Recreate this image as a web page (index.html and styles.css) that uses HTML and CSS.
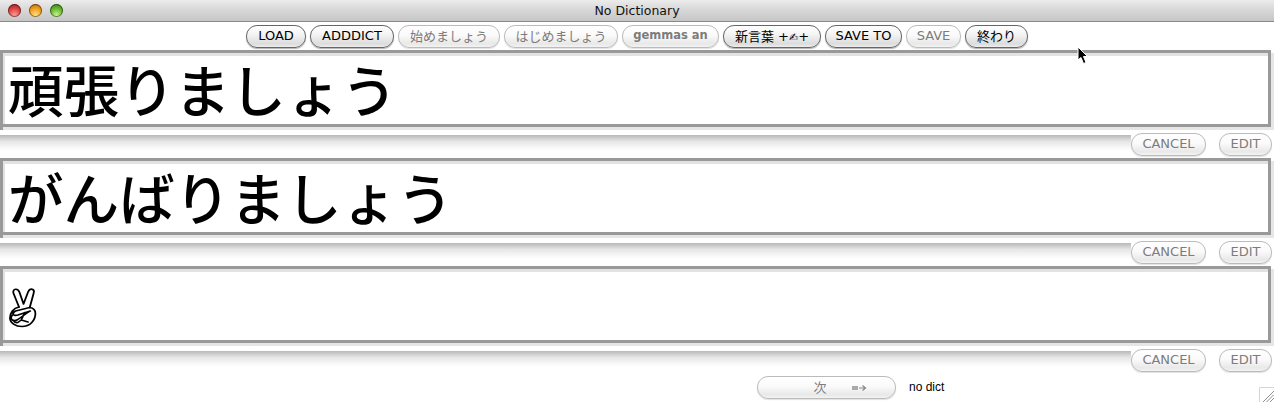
FILE: index.html
```html
<!DOCTYPE html>
<html lang="ja">

<head>
    <meta charset="UTF-8">
    <title>No Dictionary</title>
    <link rel="stylesheet" href="styles.css">
</head>

<body>
<div class="window">
    <!-- title bar -->
    <div class="titlebar">
        <div class="lights">
            <span class="light red"></span>
            <span class="light yellow"></span>
            <span class="light green"></span>
        </div>
        No Dictionary
    </div>

    <!-- toolbar -->
    <div class="toolbar">
        <button class="btn w-load">LOAD</button>
        <button class="btn w-add">ADDDICT</button>
        <button class="btn off w-start1">始めましょう</button>
        <button class="btn off w-start2">はじめましょう</button>
        <button class="btn off w-gem bold">gemmas an</button>
        <button class="btn w-new">新言葉 +<span class="tiny">✍</span>+</button>
        <button class="btn w-saveto">SAVE TO</button>
        <button class="btn off w-save">SAVE</button>
        <button class="btn w-end">終わり</button>
    </div>

    <!-- field 1 -->
    <div class="field">頑張りましょう</div>
    <div class="actions">
        <div class="strip"></div>
        <button class="btn off w-cancel">CANCEL</button>
        <button class="btn off w-edit">EDIT</button>
    </div>

    <!-- field 2 -->
    <div class="field">がんばりましょう</div>
    <div class="actions">
        <div class="strip"></div>
        <button class="btn off w-cancel">CANCEL</button>
        <button class="btn off w-edit">EDIT</button>
    </div>

    <!-- field 3 -->
    <div class="field">
        <svg class="peace" width="38" height="48" viewBox="0 0 38 48" fill="none" stroke="#000" stroke-width="1.6" stroke-linejoin="round" stroke-linecap="round">
            <g transform="translate(-0.8 0) scale(1.13 1)">
                <path d="M14 23 L9 9 Q8.5 5.5 11 5.2 Q13.5 5 14.5 8.5 L18 20 L22 8 Q23.2 4.8 25.6 5.2 Q27.8 5.8 27 9 L23.5 23.5"/>
                <path d="M14 23 C9 24 6 29 6 34 C6 39 11 42.5 16.5 42.5 C24 42.5 28.5 36 28.5 29.5 C28.5 26 26.5 24 23.5 23.5 L11 27 Q8 28.5 9 30.5 Q10 32 13 31 L24 27"/>
                <path d="M8 31 Q6 34 8 36 Q10 37.5 13 35.5 L23 27.5 M9 36.5 Q10 39 13 38.5 L16 36 L22 38 M16 36 L19 28.5"/>
            </g>
        </svg>
    </div>
    <div class="actions">
        <div class="strip"></div>
        <button class="btn off w-cancel">CANCEL</button>
        <button class="btn off w-edit">EDIT</button>
    </div>

    <!-- next -->
    <div class="footer">
        <button class="btn off w-next">次<svg class="next-arrow" width="15" height="8" viewBox="0 0 15 8">
            <rect x="0" y="2" width="6" height="4" fill="#aaa"/>
            <path d="M7 4 H13 M10.5 1.5 L13.5 4 L10.5 6.5" fill="none" stroke="#888" stroke-width="1.2"/>
        </svg></button>
        <span class="status">no dict</span>
    </div>

    <svg class="grip" width="15" height="15" viewBox="0 0 15 15" fill="none">
        <path d="M0.5 15 V0.5 H15" stroke="#d4d4d4"/>
        <path d="M4 15 L15 4 M7.5 15 L15 7.5 M11 15 L15 11" stroke="#8c8c8c"/>
    </svg>

    <svg class="cursor" width="12" height="19" viewBox="0 0 12 19">
        <path d="M1 1 L1 14 L4 11.5 L6.5 17.5 L9 16.5 L6.5 10.5 L10.5 10.5 Z" fill="#000" stroke="#fff" stroke-width="1"/>
    </svg>
</div>
</body>

</html>
```

FILE: styles.css
```css
html, body {
    margin: 0;
    padding: 0;
    background-color: #fff;
}

.window {
    width: 1274px;
    height: 402px;
    position: relative;
    overflow: hidden;
    font-family: "DejaVu Sans", "Noto Sans CJK JP", sans-serif;
    color: #000;
}

.titlebar {
    height: 21px;
    line-height: 21px;
    text-align: center;
    font-size: 12.5px;
    color: #111;
    background: linear-gradient(#ececec, #d8d8d8 45%, #c6c6c6);
    border-bottom: 1px solid #8a8a8a;
    position: relative;
}

.lights {
    display: flex;
    gap: 8px;
    position: absolute;
    top: 4px;
    left: 8px;
}

.light {
    width: 13px;
    height: 13px;
    border-radius: 50%;
    box-shadow: inset 0 0 0 1px rgba(0, 0, 0, 0.45);
}

.red {
    background: radial-gradient(circle at 50% 85%, #ff9a96, #d8403c 55%, #8e1a18);
}

.yellow {
    background: radial-gradient(circle at 50% 85%, #ffdf80, #ec9a1e 55%, #a8620c);
}

.green {
    background: radial-gradient(circle at 50% 85%, #c6f58a, #62b32c 55%, #33751a);
}

.toolbar {
    height: 28px;
    display: flex;
    justify-content: center;
    align-items: center;
    gap: 4px;
}

.btn {
    height: 23px;
    padding: 0 0 2px;
    box-sizing: border-box;
    border: 1px solid #666;
    border-radius: 11px;
    background: linear-gradient(#fff, #f4f4f4 40%, #dcdcdc 85%, #eee);
    box-shadow: 0 1px 1px rgba(0, 0, 0, 0.3);
    font-family: inherit;
    font-size: 13px;
    color: #000;
    flex: none;
}

.off {
    border-color: #bbb;
    background: linear-gradient(#fff, #fafafa 45%, #e8e8e8 85%, #f4f4f4);
    box-shadow: 0 1px 1px rgba(0, 0, 0, 0.12);
    color: #7c7c7c;
}

.bold {
    font-weight: bold;
    font-size: 11.5px;
}

.tiny {
    font-size: 11px;
}

.w-load { width: 60px; }
.w-add { width: 84px; }
.w-start1 { width: 102px; }
.w-start2 { width: 114px; }
.w-gem { width: 97px; }
.w-new { width: 98px; }
.w-saveto { width: 77px; }
.w-save { width: 55px; }
.w-end { width: 63px; }
.w-cancel { width: 75px; margin-top: 6px; }
.w-edit { width: 53px; margin-top: 6px; margin-left: 13px; }

.field {
    width: 1271px;
    height: 77px;
    box-sizing: border-box;
    border: 3px solid #999;
    /* bevel: light inside top/left, light outside right/bottom */
    box-shadow: inset 2px 3px 0 #e2e2e2, 3px 3px 0 #e6e6e6, 0 3px 0 #999;
    padding: 3px 0 0 5px;
    font-family: "Noto Sans CJK JP", sans-serif;
    font-weight: 500;
    font-size: 55.6px;
    line-height: 64px;
    white-space: nowrap;
}

.peace {
    display: block;
    margin: 12px 0 0 -4px;
}

.actions {
    height: 31px;
    display: flex;
    align-items: flex-start;
}

.strip {
    width: 1131px;
    height: 16px;
    margin-top: 8px;
    background: linear-gradient(#b8b8b8, #e6e6e6 40%, #f6f6f6 75%, #fff);
}

.footer {
    height: 28px;
    display: flex;
    align-items: flex-start;
    padding: 2px 0 0 757px;
    box-sizing: border-box;
}

.w-next {
    width: 139px;
    padding-left: 27px;
}

.next-arrow {
    margin-left: 25px;
}

.status {
    margin: 4px 0 0 13px;
    font-family: "Liberation Sans", sans-serif;
    font-size: 12px;
}

.grip {
    position: absolute;
    right: 0;
    bottom: 0;
}

.cursor {
    position: absolute;
    top: 46px;
    left: 1077px;
}
```
